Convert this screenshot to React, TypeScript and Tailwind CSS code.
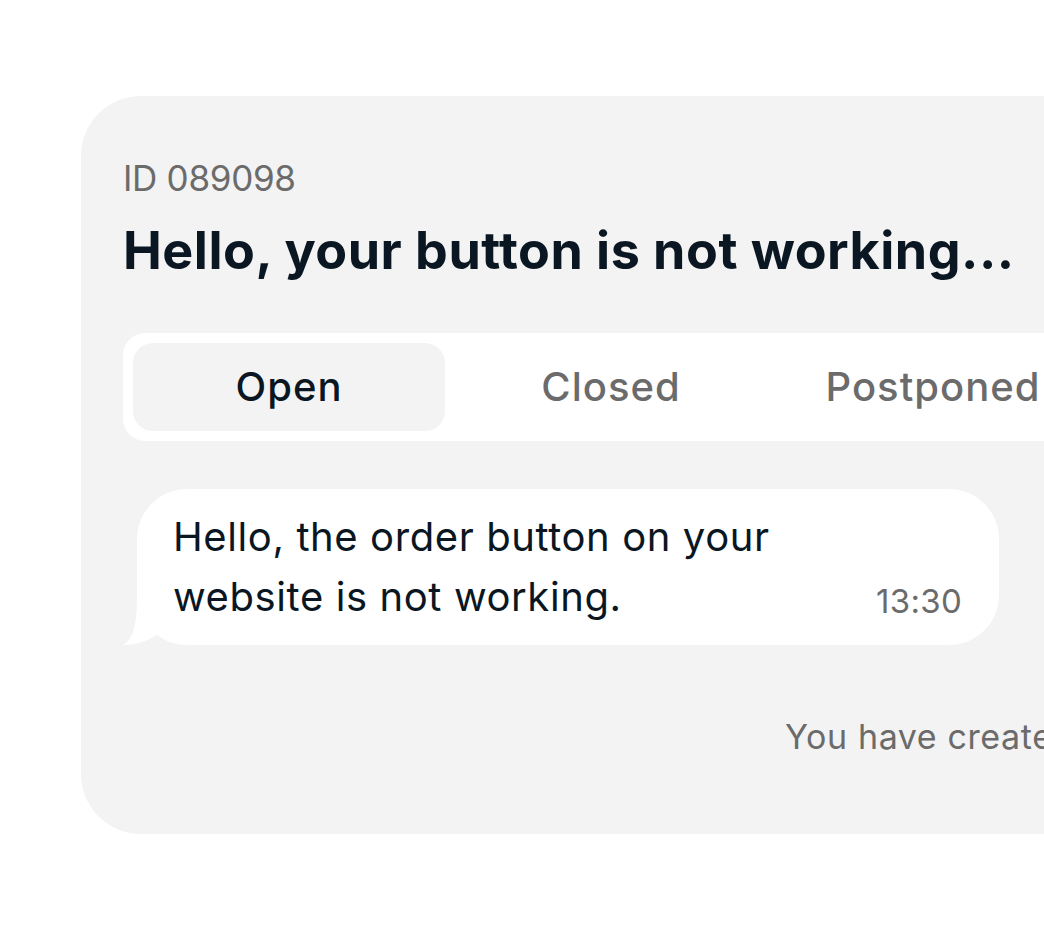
export default function App() {
  const tabs = ["Open", "Closed", "Postponed"]
  const active = "Open"

  return (
    <div className="w-[1044px] h-[930px] overflow-hidden bg-white pt-[96px] pl-[81px] font-['Inter',_'Noto_Sans',_sans-serif]">
      <div className="w-[1062px] rounded-[60px] bg-[#f3f3f3] pt-[60px] pb-[77px] pl-[42px] pr-[42px]">
        <p className="text-[35px] leading-[44px] text-[#6b6b6b] tracking-[-0.3px]">ID 089098</p>
        <h1 className="mt-[21px] text-[52px] leading-[60px] font-bold text-[#0a1722] tracking-[0.5px] whitespace-nowrap">
          Hello, your button is not working...
        </h1>

        <div className="mt-[52px] flex gap-[10px] rounded-[22px] bg-white p-[10px]">
          {tabs.map((tab) => (
            <button
              key={tab}
              className={
                tab === active
                  ? "w-[312px] h-[88px] rounded-[20px] bg-[#f3f3f3] text-[40px] font-medium text-[#0a1722] tracking-[1px]"
                  : "w-[312px] h-[88px] rounded-[20px] text-[40px] font-medium text-[#6b6b6b] tracking-[1px]"
              }
            >
              {tab}
            </button>
          ))}
        </div>

        <div className="relative mt-[48px] ml-[14px] w-[862px]">
          <svg
            className="absolute left-[-14px] bottom-0"
            width="40"
            height="50"
            viewBox="0 0 40 50"
          >
            <path d="M14 0 C14 28 11 44 0 50 C11 50 22 47 34 40 Z" fill="#ffffff" />
          </svg>
          <div className="relative flex items-end justify-between rounded-[50px] bg-white pt-[18px] pb-[18px] pl-[36px] pr-[37px]">
            <p className="text-[40px] leading-[60px] text-[#0a1722] tracking-[0.6px]">
              Hello, the order button on your
              <br />
              website is not working.
            </p>
            <span className="mb-[6px] text-[33px] leading-[40px] text-[#6b6b6b] tracking-[0.3px]">13:30</span>
          </div>
        </div>

        <div className="mt-[72px] pl-[662px] whitespace-nowrap text-[34px] leading-[40px] text-[#6b6b6b] tracking-[0.6px]">
          You have created a ticket
        </div>
      </div>
    </div>
  )
}
